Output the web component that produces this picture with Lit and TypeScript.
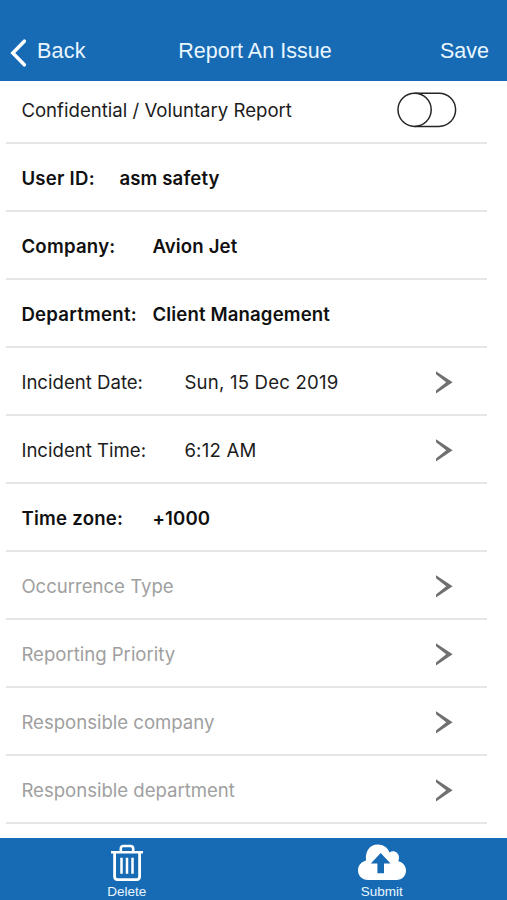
import { LitElement, html, css, svg, nothing } from "lit";
import { customElement, property } from "lit/decorators.js";

interface Field {
  label: string;
  value?: string;
  column?: "near" | "mid" | "far";
  tone: "strong" | "plain" | "muted";
  opens?: boolean;
}

const FIELDS: Field[] = [
  { label: "User ID:", value: "asm safety", column: "near", tone: "strong" },
  { label: "Company:", value: "Avion Jet", column: "mid", tone: "strong" },
  { label: "Department:", value: "Client Management", column: "mid", tone: "strong" },
  { label: "Incident Date:", value: "Sun, 15 Dec 2019", column: "far", tone: "plain", opens: true },
  { label: "Incident Time:", value: "6:12 AM", column: "far", tone: "plain", opens: true },
  { label: "Time zone:", value: "+1000", column: "mid", tone: "strong" },
  { label: "Occurrence Type", tone: "muted", opens: true },
  { label: "Reporting Priority", tone: "muted", opens: true },
  { label: "Responsible company", tone: "muted", opens: true },
  { label: "Responsible department", tone: "muted", opens: true },
];

@customElement("nav-header")
export class NavHeader extends LitElement {
  static styles = css`
    :host {
      display: grid;
      grid-template-columns: 1fr auto 1fr;
      align-items: center;
      height: 81px;
      padding: 21px 18px 0 10px;
      box-sizing: border-box;
      background: #176bb5;
      color: #e9f6ff;
      font: 21.5px/26px "Liberation Sans", Arial, sans-serif;
      flex: none;
    }
    .back {
      display: flex;
      align-items: center;
      gap: 10px;
      letter-spacing: 0.2px;
    }
    .back svg {
      margin-top: 4px;
    }
    .title {
      padding-left: 11px;
      letter-spacing: 0.05px;
    }
    .save {
      text-align: right;
    }
  `;
  render() {
    return html`
      <div class="back">
        <svg width="17" height="28" viewBox="0 0 17 28" fill="none" stroke="#fff" stroke-width="3.5" stroke-linecap="round">
          <path d="M14.3 2.2 2.8 14 14.3 25.8" />
        </svg>
        <span>Back</span>
      </div>
      <div class="title">Report An Issue</div>
      <div class="save">Save</div>
    `;
  }
}

@customElement("form-row")
export class FormRow extends LitElement {
  @property({ attribute: false }) field!: Field;
  static styles = css`
    .row {
      display: flex;
      align-items: center;
      height: 68px;
      box-sizing: border-box;
      padding: 2px 34px 0 15.4px;
      border-bottom: 2px solid #e6e6e6;
      color: #1c1c1c;
      font-size: 18.6px;
      line-height: 24px;
      white-space: pre;
    }
    .strong {
      font-weight: 600;
      color: #101010;
    }
    .muted {
      color: #a0a0a0;
      letter-spacing: -0.02px;
    }
    .label.near {
      width: 98px;
    }
    .label.mid {
      width: 131px;
    }
    .label.far {
      width: 163px;
    }
    .strong .label {
      letter-spacing: 0.25px;
    }
    .strong .value {
      letter-spacing: 0.14px;
    }
    .plain .value {
      letter-spacing: 0.2px;
    }
    svg {
      margin-left: auto;
    }
  `;
  render() {
    const f = this.field;
    return html`<div class="row ${f.tone}">
      <span class="label ${f.column ?? ""}">${f.label}</span
      >${f.value ? html`<span class="value">${f.value}</span>` : nothing}
      ${f.opens
        ? html`<svg width="18" height="24" viewBox="0 0 18 24">
            <path d="M1 1.2 17.6 12.2 1 23.4V20.4L11.2 12.2 1 4.2Z" fill="#707070" />
          </svg>`
        : nothing}
    </div>`;
  }
}

@customElement("action-bar")
export class ActionBar extends LitElement {
  static styles = css`
    :host {
      display: grid;
      grid-template-columns: 1fr 1fr;
      height: 62px;
      flex: none;
      background: #176bb5;
      color: #e9f6ff;
      font: 13.5px/16px "Liberation Sans", Arial, sans-serif;
    }
    .action {
      display: flex;
      flex-direction: column;
      align-items: center;
      justify-content: flex-end;
      gap: 2px;
    }
    .submit {
      padding-left: 3px;
    }
  `;
  render() {
    const trash = svg`
      <path d="M1 8.2H33M10.8 7.5V4.8Q10.8 2 13.5 2H20.5Q23.2 2 23.2 4.8V7.5" fill="none" stroke="#fff" stroke-width="2.6"/>
      <path d="M4.6 8.5V32.6Q4.6 35.6 7.6 35.6H26.6Q29.6 35.6 29.6 32.6V8.5" fill="none" stroke="#fff" stroke-width="2.8"/>
      <path d="M11.5 13.8V29.8M17 13.8V29.8M22.5 13.8V29.8" stroke="#fff" stroke-width="2.5" fill="none"/>`;
    const cloud = svg`
      <path d="M10 36C4 36 0 31.5 0 26.5 0 21.5 3 18 8 16.5 7 7 12 0.5 19.5 0.5 25.5 0.5 29.8 3.5 31.5 8.5 35.5 5.5 41 8.5 41 13.5 41 15 40.7 16.2 40.2 17.2 45.2 18.5 48 22 48 26.5 48 32 44 36 38.5 36Z" fill="#fff"/>
      <path d="M22.7 9 32.5 19.5H26V29.3H19.4V19.5H12.8Z" fill="#176bb5"/>`;
    return html`
      <div class="action">
        <svg width="34" height="38" viewBox="0 0 34 38">${trash}</svg>
        <span>Delete</span>
      </div>
      <div class="action submit">
        <svg width="48" height="38" viewBox="0 0 48 38">${cloud}</svg>
        <span>Submit</span>
      </div>
    `;
  }
}

@customElement("app-root")
export class AppRoot extends LitElement {
  static styles = css`
    :host {
      display: flex;
      flex-direction: column;
      height: 900px;
      background: #fff;
      font-family: Inter, "Liberation Sans", sans-serif;
    }
    .form {
      flex: 1;
      min-height: 0;
      overflow: hidden;
      padding: 0 20px 0 6px;
    }
    .confidential {
      display: flex;
      align-items: center;
      justify-content: space-between;
      height: 63px;
      box-sizing: border-box;
      padding: 0 30px 3px 15.4px;
      border-bottom: 2px solid #e6e6e6;
      color: #1c1c1c;
      font-size: 18.6px;
      line-height: 24px;
    }
  `;
  render() {
    return html`
      <nav-header></nav-header>
      <div class="form">
        <div class="confidential">
          <span>Confidential / Voluntary Report</span>
          <svg width="60" height="36" viewBox="0 0 60 36" fill="none" stroke="#252525" stroke-width="1.5">
            <path d="M17.7 1.2H42A16.5 16.5 0 0 1 42 34.4H17.7" />
            <circle cx="17.6" cy="17.8" r="16.6" />
          </svg>
        </div>
        ${FIELDS.map((f) => html`<form-row .field=${f}></form-row>`)}
      </div>
      <action-bar></action-bar>
    `;
  }
}
